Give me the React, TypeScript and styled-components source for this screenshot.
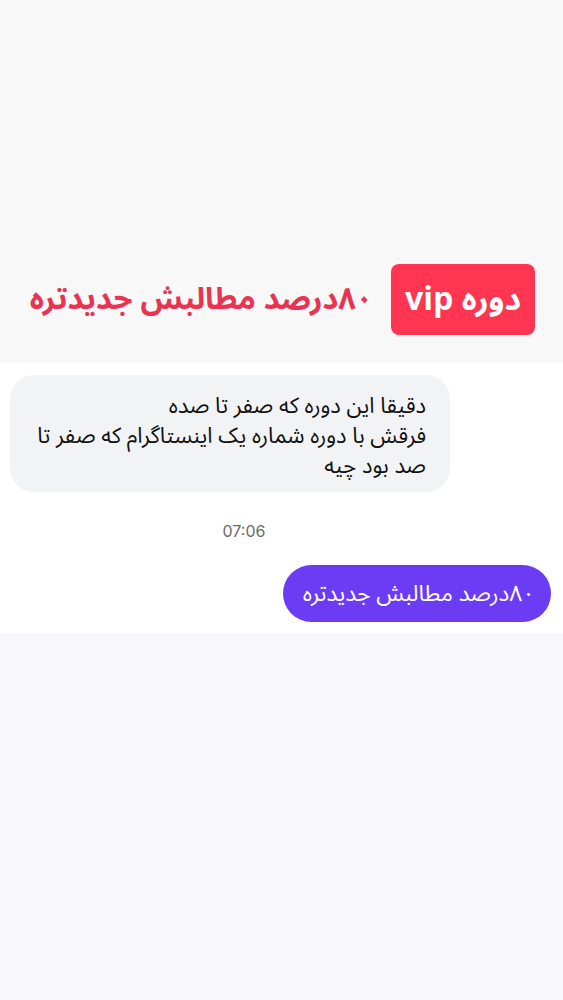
import React from "react";
import styled, { createGlobalStyle } from "styled-components";

const Global = createGlobalStyle`
  html, body { margin: 0; padding: 0; background: #f8f8fa; }
  * { box-sizing: border-box; }
`;

const FONT = `"Noto Sans Arabic", "DejaVu Sans", "Noto Sans", sans-serif`;

const Page = styled.div`
  width: 563px;
  min-height: 1000px;
  display: flex;
  flex-direction: column;
  font-family: ${FONT};
`;

const Header = styled.header`
  height: 363px;
  background: #f8f8f9;
  display: flex;
  align-items: flex-end;
  padding: 0 28px 28px 0;
`;

const TitleRow = styled.div`
  direction: rtl;
  display: flex;
  align-items: center;
  gap: 18px;
  width: 100%;
`;

const Badge = styled.div`
  background: #ff3552;
  color: #fff;
  border-radius: 8px;
  height: 71px;
  padding: 0 14px;
  display: flex;
  align-items: center;
  font-weight: 700;
  font-size: 32px;
  white-space: nowrap;
`;

const Title = styled.h1`
  margin: 0;
  color: #ea3350;
  font-weight: 700;
  font-size: 30.5px;
  white-space: nowrap;
`;

const Chat = styled.section`
  background: #ffffff;
  padding: 12px 12px 11px 10px;
  display: flex;
  flex-direction: column;
`;

const Incoming = styled.div`
  align-self: flex-start;
  width: 440px;
  background: #f2f3f5;
  border-radius: 24px;
  padding: 16px 24px 11px;
  direction: rtl;
  color: #111;
  font-size: 22px;
  line-height: 30px;
`;

const Time = styled.div`
  margin-top: 29px;
  text-align: center;
  color: #6b6b6b;
  font-family: "Inter", "Liberation Sans", sans-serif;
  font-size: 16px;
  line-height: 20px;
  padding-right: 73px;
`;

const Outgoing = styled.div`
  align-self: flex-end;
  margin-top: 24px;
  background: #6c3cf5;
  color: #fff;
  border-radius: 29px;
  height: 57px;
  padding: 0 16px 0 20px;
  display: flex;
  align-items: center;
  direction: rtl;
  font-size: 22.5px;
`;

const Footer = styled.div`
  flex: 1;
  background: #f8f8fa;
`;

export default function App() {
  return (
    <Page>
      <Global />
      <Header>
        <TitleRow>
          <Badge>دوره vip</Badge>
          <Title>۸۰درصد مطالبش جدیدتره</Title>
        </TitleRow>
      </Header>
      <Chat>
        <Incoming>
          دقیقا این دوره که صفر تا صده
          <br />
          فرقش با دوره شماره یک اینستاگرام که صفر تا
          <br />
          صد بود چیه
        </Incoming>
        <Time>07:06</Time>
        <Outgoing>۸۰درصد مطالبش جدیدتره</Outgoing>
      </Chat>
      <Footer />
    </Page>
  );
}
